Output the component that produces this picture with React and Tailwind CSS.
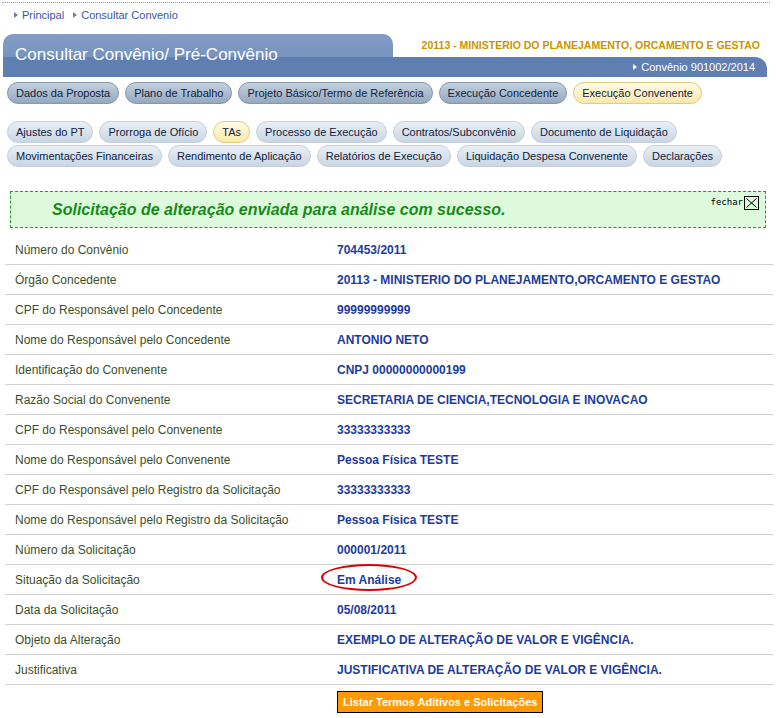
import React from "react";

const F = { fontFamily: '"Liberation Sans", Arial, sans-serif' };

function Tri({ color = "#7080a0" }) {
  return (
    <span
      className="inline-block w-0 h-0 border-y-[3px] border-y-transparent border-l-[4px] mr-[4px] align-middle"
      style={{ borderLeftColor: color }}
    />
  );
}

function Pill({ label, active, light }) {
  let cls =
    "h-[22px] px-[8px] rounded-full border text-[11px] leading-[20px] whitespace-nowrap text-[#0f2340] ";
  if (active) cls += "bg-gradient-to-b from-[#fffbea] to-[#fbe8a6] border-[#e4cc7c]";
  else if (light) cls += "bg-gradient-to-b from-[#e9eff5] to-[#c9d6e3] border-[#c3cfdb]";
  else cls += "bg-gradient-to-b from-[#c4d1de] to-[#94a9c0] border-[#8398b0]";
  return <div className={cls}>{label}</div>;
}

const rows = [
  ["Número do Convênio", "704453/2011"],
  ["Órgão Concedente", "20113 - MINISTERIO DO PLANEJAMENTO,ORCAMENTO E GESTAO"],
  ["CPF do Responsável pelo Concedente", "99999999999"],
  ["Nome do Responsável pelo Concedente", "ANTONIO NETO"],
  ["Identificação do Convenente", "CNPJ 00000000000199"],
  ["Razão Social do Convenente", "SECRETARIA DE CIENCIA,TECNOLOGIA E INOVACAO"],
  ["CPF do Responsável pelo Convenente", "33333333333"],
  ["Nome do Responsável pelo Convenente", "Pessoa Física TESTE"],
  ["CPF do Responsável pelo Registro da Solicitação", "33333333333"],
  ["Nome do Responsável pelo Registro da Solicitação", "Pessoa Física TESTE"],
  ["Número da Solicitação", "000001/2011"],
  ["Situação da Solicitação", "Em Análise", true],
  ["Data da Solicitação", "05/08/2011"],
  ["Objeto da Alteração", "EXEMPLO DE ALTERAÇÃO DE VALOR E VIGÊNCIA."],
  ["Justificativa", "JUSTIFICATIVA DE ALTERAÇÃO DE VALOR E VIGÊNCIA."],
];

export default function App() {
  return (
    <div className="w-[777px] h-[718px] bg-white overflow-hidden" style={F}>
      <div className="mx-[2px] mt-[2px] border-t border-dotted border-[#9a9a9a] w-[768px]" />
      <div className="h-[26px] pl-[14px] pb-[2px] text-[11px] leading-[14px] text-[#3a55a8] flex items-center">
        <Tri />
        <span>Principal</span>
        <span className="ml-[9px]" />
        <Tri />
        <span>Consultar Convenio</span>
      </div>

      {/* header */}
      <div className="ml-[3px] w-[764px] mt-[5px]">
        <div className="flex items-end h-[23px]">
          <div className="relative z-10 w-[390px] h-[23px] bg-gradient-to-b from-[#819dc6] to-[#7793be] rounded-t-[10px] pl-[12px] pt-[9px]">
            <span className="text-white text-[17px] leading-[20px] whitespace-nowrap">
              Consultar Convênio/ Pré-Convênio
            </span>
          </div>
          <div className="flex-1 text-right pr-[7px] pb-[6px] text-[#c99500] font-bold text-[10.5px] leading-[12px] whitespace-nowrap">
            20113 - MINISTERIO DO PLANEJAMENTO, ORCAMENTO E GESTAO
          </div>
        </div>
        <div className="h-[20px] bg-[#5f7fb2] rounded-tr-[12px] flex justify-end items-center pr-[12px] text-white text-[11px]">
          <Tri color="#ffffff" />
          <span>Convênio 901002/2014</span>
        </div>
      </div>

      {/* tabs */}
      <div className="pl-[7px] mt-[5px] flex gap-[6px]">
        <Pill label="Dados da Proposta" />
        <Pill label="Plano de Trabalho" />
        <Pill label="Projeto Básico/Termo de Referência" />
        <Pill label="Execução Concedente" />
        <Pill label="Execução Convenente" active />
      </div>
      <div className="pl-[7px] mt-[17px] flex gap-[6px]">
        <Pill light label="Ajustes do PT" />
        <Pill light label="Prorroga de Ofício" />
        <Pill label="TAs" active />
        <Pill light label="Processo de Execução" />
        <Pill light label="Contratos/Subconvênio" />
        <Pill light label="Documento de Liquidação" />
      </div>
      <div className="pl-[7px] mt-[2px] flex gap-[6px]">
        <Pill light label="Movimentações Financeiras" />
        <Pill light label="Rendimento de Aplicação" />
        <Pill light label="Relatórios de Execução" />
        <Pill light label="Liquidação Despesa Convenente" />
        <Pill light label="Declarações" />
      </div>

      {/* message */}
      <div className="ml-[10px] mt-[24px] w-[756px] h-[37px] border border-dashed border-[#2a962a] bg-[#ddfbdc] flex items-center relative">
        <span className="ml-[41px] text-[16px] font-bold italic text-[#198a19] whitespace-nowrap">
          Solicitação de alteração enviada para análise com sucesso.
        </span>
        <div className="absolute right-[6px] top-[4px] flex items-center gap-[1px]">
          <span className="text-[9px] text-black" style={{ fontFamily: '"DejaVu Sans Mono", monospace' }}>
            fechar
          </span>
          <svg width="15" height="14" viewBox="0 0 15 14">
            <rect x="0.5" y="0.5" width="14" height="13" fill="none" stroke="#000" />
            <path d="M2.5 2.5 L12.5 11.5 M12.5 2.5 L2.5 11.5" stroke="#000" strokeWidth="1" />
          </svg>
        </div>
      </div>

      {/* table */}
      <div className="ml-[5px] w-[768px] mt-[7px]">
        {rows.map(([l, v, mark]) => (
          <div key={l} className="grid grid-cols-[332px_1fr] h-[30px] border-b border-[#cfcfcf] items-center">
            <div className="pl-[10px] text-[12px] text-[#3c4f2a] whitespace-nowrap">{l}</div>
            <div className="relative text-[12px] font-bold text-[#1c3c9c] whitespace-nowrap">
              {v}
              {mark && (
                <div className="absolute left-[-16px] top-[-7px] w-[96px] h-[27px] rounded-[50%] border-2 border-[#e00000]" />
              )}
            </div>
          </div>
        ))}
        <div className="grid grid-cols-[332px_1fr] pt-[4px]">
          <div />
          <div>
            <button className="h-[22px] px-[5px] bg-[#ff9900] border border-black text-white font-bold text-[11px] leading-[20px] whitespace-nowrap">
              Listar Termos Aditivos e Solicitações
            </button>
          </div>
        </div>
      </div>
    </div>
  );
}
